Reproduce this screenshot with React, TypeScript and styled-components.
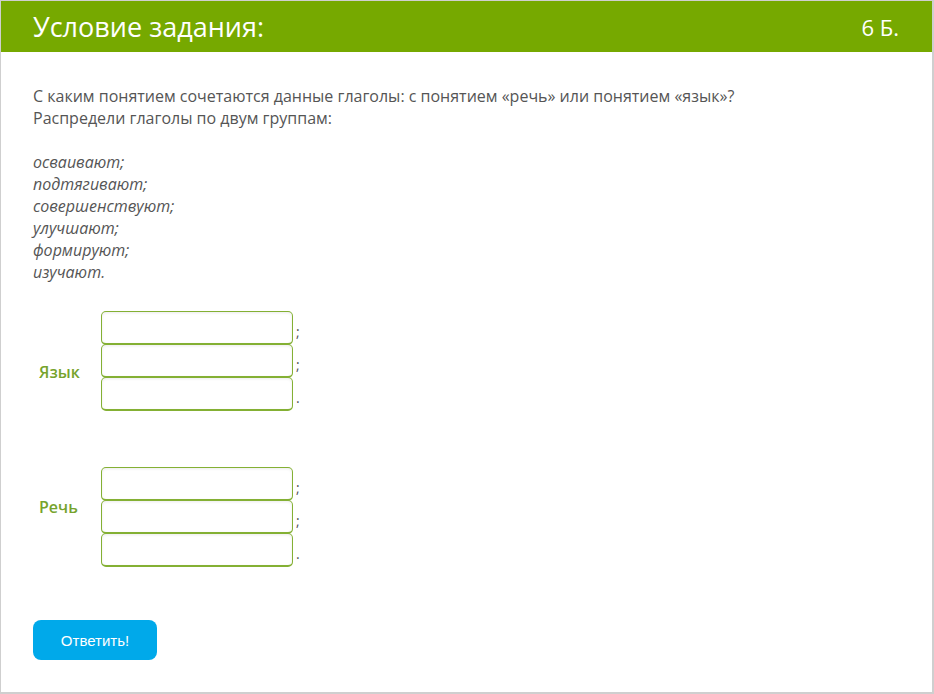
import React from 'react';
import styled, {createGlobalStyle} from 'styled-components';

const GlobalStyle = createGlobalStyle`
  html, body {
    margin: 0;
    padding: 0;
    background: #fff;
  }
  body {
    font-family: "Open Sans", "Noto Sans", sans-serif;
  }
`

const Frame = styled.div`
  width: 934px;
  height: 694px;
  box-sizing: border-box;
  border: 1px solid #cfcfcf;
  border-bottom-width: 2px;
  border-right-width: 2px;
  background: #fff;
  overflow: hidden;
`

const Header = styled.div`
  height: 51px;
  background: #76a900;
  display: flex;
  align-items: center;
  justify-content: space-between;
  padding: 0 33px 0 32px;
  color: #fff;
  .title {
    font-size: 27px;
  }
  .points {
    font-size: 22px;
  }
`

const Body = styled.div`
  padding: 33px 32px 0;
  color: #555;
  font-size: 16px;
  line-height: 22px;
`

const Para = styled.p`
  margin: 0;
`

const Words = styled.div`
  margin-top: 22px;
  font-style: italic;
`

const Group = styled.div<{$top: number}>`
  display: flex;
  align-items: flex-start;
  margin-top: ${p => p.$top}px;
`

const GroupLabel = styled.div<{$offset: number}>`
  width: 62px;
  padding-left: 6px;
  padding-top: ${p => p.$offset}px;
  color: #76a32c;
  font-weight: 600;
  font-size: 16px;
`

const Fields = styled.div`
  display: flex;
  flex-direction: column;
`

const FieldRow = styled.div`
  display: flex;
  align-items: flex-end;
  height: 34px;
  margin-bottom: -1px;
  &:last-child {
    margin-bottom: 0;
  }
  span {
    margin-left: 3px;
    padding-bottom: 6px;
    font-size: 14px;
    line-height: 14px;
    color: #555;
  }
`

const Field = styled.input`
  width: 192px;
  height: 34px;
  box-sizing: border-box;
  border: 1px solid #84b034;
  border-bottom-width: 2px;
  border-radius: 5px;
  background: #fff;
  box-shadow: inset 0 1px 3px rgba(0, 0, 0, 0.08);
  outline: none;
  padding: 0 6px;
  font-family: inherit;
  font-size: 15px;
`

const AnswerButton = styled.button`
  margin-top: 53px;
  width: 124px;
  height: 40px;
  border: none;
  border-radius: 8px;
  background: #00a9ea;
  color: #fff;
  font-family: "Liberation Sans", Arial, sans-serif;
  font-size: 15px;
  cursor: pointer;
`

const words = ['осваивают;', 'подтягивают;', 'совершенствуют;', 'улучшают;', 'формируют;', 'изучают.']

const marks = [';', ';', '.']

const AnswerGroup = ({label, top, offset}: {label: string; top: number; offset: number}) => (
  <Group $top={top}>
    <GroupLabel $offset={offset}>{label}</GroupLabel>
    <Fields>
      {marks.map((m, i) => (
        <FieldRow key={i}>
          <Field type="text"/>
          <span>{m}</span>
        </FieldRow>
      ))}
    </Fields>
  </Group>
)

const App = () => {
  return (
    <>
      <GlobalStyle/>
      <Frame>
        <Header>
          <span className="title">Условие задания:</span>
          <span className="points">6 Б.</span>
        </Header>
        <Body>
          <Para>С каким понятием сочетаются данные глаголы: с понятием «речь» или понятием «язык»?</Para>
          <Para>Распредели глаголы по двум группам:</Para>
          <Words>
            {words.map(w => <div key={w}>{w}</div>)}
          </Words>
          <AnswerGroup label="Язык" top={28} offset={50}/>
          <AnswerGroup label="Речь" top={56} offset={29}/>
          <AnswerButton>Ответить!</AnswerButton>
        </Body>
      </Frame>
    </>
  );
};

export default App;
